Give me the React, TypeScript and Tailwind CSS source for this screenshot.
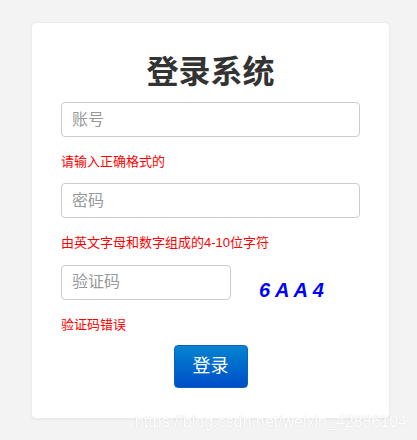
import React from "react";

export default function App() {
  const font = { fontFamily: '"Liberation Sans", "Noto Sans CJK SC", sans-serif' };

  return (
    <div className="relative min-h-[440px] w-[417px] bg-[#f3f3f3] pt-[22px]" style={font}>
      {/* Login card */}
      <div className="ml-[31px] w-[359px] rounded-[5px] border border-[#ebebeb] bg-white px-[29px] pt-[30px] pb-[30px] shadow-[0_1px_2px_rgba(0,0,0,0.05)]">
        <h1 className="text-center text-[32px] font-bold leading-[38px] text-[#333]">登录系统</h1>

        <input
          placeholder="账号"
          className="mt-[11px] block h-[35px] w-full rounded-[4px] border border-[#ccc] px-[10px] text-[16px] text-[#555] placeholder:text-[#999] outline-none"
        />
        <p className="mt-[16px] text-[13px] leading-[18px] text-[#ff0000]">请输入正确格式的</p>

        <input
          placeholder="密码"
          type="password"
          className="mt-[12px] block h-[35px] w-full rounded-[4px] border border-[#ccc] px-[10px] text-[16px] text-[#555] placeholder:text-[#999] outline-none"
        />
        <p className="mt-[16px] text-[13px] leading-[18px] text-[#ff0000]">由英文字母和数字组成的4-10位字符</p>

        <div className="mt-[12px] flex items-center">
          <input
            placeholder="验证码"
            className="block h-[35px] w-[170px] rounded-[4px] border border-[#ccc] px-[10px] text-[16px] text-[#555] placeholder:text-[#999] outline-none"
          />
          <span className="ml-[28px] mt-[16px] text-[20px] font-bold italic leading-none text-[#0000ff]">6 A A 4</span>
        </div>
        <p className="mt-[16px] text-[13px] leading-[18px] text-[#ff0000]">验证码错误</p>

        <div className="mt-[11px] flex justify-center">
          <button className="h-[43px] w-[74px] rounded-[4px] border border-[#0a63b8] bg-gradient-to-b from-[#0a84d0] to-[#004cc8] text-[18px] text-white">
            登录
          </button>
        </div>
      </div>

      {/* watermark */}
      <span className="absolute top-[410px] right-[10px] text-[16px] text-white [text-shadow:0_0_1px_#cfcfcf]">
        https://blog.csdn.net/weixin_42886104
      </span>
    </div>
  );
}
